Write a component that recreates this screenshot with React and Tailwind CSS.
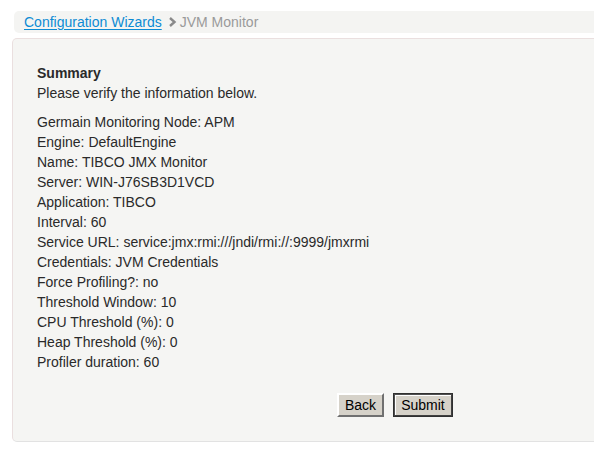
import React from 'react';

const items = [
    ['Germain Monitoring Node', 'APM'],
    ['Engine', 'DefaultEngine'],
    ['Name', 'TIBCO JMX Monitor'],
    ['Server', 'WIN-J76SB3D1VCD'],
    ['Application', 'TIBCO'],
    ['Interval', '60'],
    ['Service URL', 'service:jmx:rmi:///jndi/rmi://:9999/jmxrmi'],
    ['Credentials', 'JVM Credentials'],
    ['Force Profiling?', 'no'],
    ['Threshold Window', '10'],
    ['CPU Threshold (%)', '0'],
    ['Heap Threshold (%)', '0'],
    ['Profiler duration', '60'],
];

const App = () => {
    return (
        <div className="w-[594px] h-[452px] overflow-hidden bg-white text-[#2a2a2a] font-['Liberation_Sans',Arial,sans-serif]">
            {/* breadcrumb */}
            <div className="ml-[14px] mt-[11px] w-[600px] h-[22px] bg-[#f4f4f2] rounded-l-[5px] flex items-center pl-[10px] text-[14px] leading-[16px]">
                <a href="#" className="text-[#0d8bd4] underline underline-offset-[2px]">
                    Configuration Wizards
                </a>
                <svg width="9" height="10" viewBox="0 0 9 10" className="ml-[6px] mr-[3px]">
                    <path d="M2 1 L6.5 5 L2 9" fill="none" stroke="#8a8a8a" strokeWidth="2.4" />
                </svg>
                <span className="text-[#9a9a9a]">JVM Monitor</span>
            </div>

            {/* panel */}
            <div className="ml-[12px] mt-[5px] w-[600px] h-[404px] bg-[#f5f5f3] border border-[#eadfdf] border-b-[#e2e2e2] rounded-l-[5px] pl-[24px] pt-[24px] text-[14px] leading-[20px]">
                <div className="font-bold">Summary</div>
                <div>Please verify the information below.</div>
                <div className="mt-[9px]">
                    {items.map(([label, value]) => (
                        <div key={label}>
                            {label}: {value}
                        </div>
                    ))}
                </div>
                <div className="flex gap-[9px] pl-[300px] mt-[21px]">
                    <button className="h-[24px] px-[6px] bg-[#d6d2c9] border-2 border-t-white border-l-white border-r-[#707070] border-b-[#707070] text-[14px] leading-[18px] text-black">
                        Back
                    </button>
                    <button className="h-[24px] px-[6px] bg-[#d6d2c9] border-2 border-t-[#505050] border-l-[#505050] border-r-[#404040] border-b-[#404040] outline outline-1 outline-[#303030] -outline-offset-1 shadow-[inset_1px_1px_0_#fff] text-[14px] leading-[18px] text-black">
                        Submit
                    </button>
                </div>
            </div>
        </div>
    );
};

export default App;
